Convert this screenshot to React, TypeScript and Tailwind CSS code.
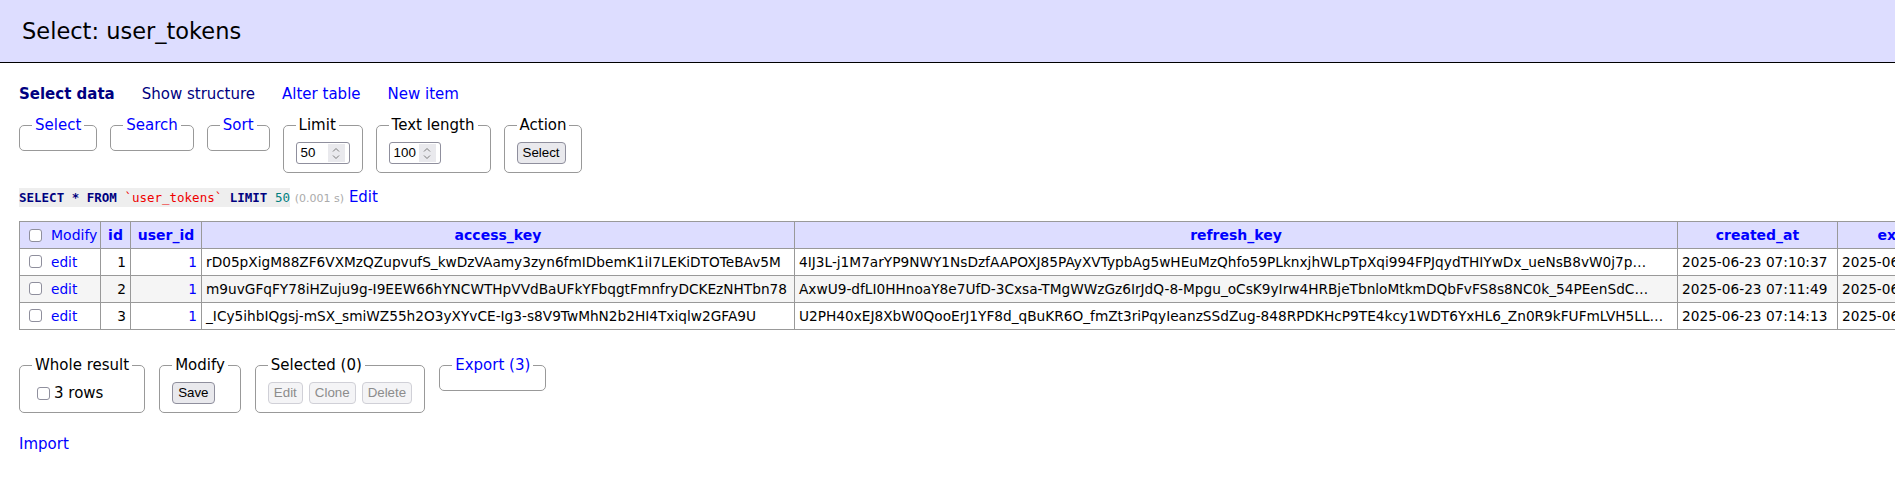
import React from 'react';

type Row = {
  id: number;
  userId: number;
  access: string;
  refresh: string;
  created: string;
  expires: string;
};

const rows: Row[] = [
  {
    id: 1,
    userId: 1,
    access: 'rD05pXigM88ZF6VXMzQZupvufS_kwDzVAamy3zyn6fmIDbemK1iI7LEKiDTOTeBAv5M',
    refresh:
      '4IJ3L-j1M7arYP9NWY1NsDzfAAPOXJ85PAyXVTypbAg5wHEuMzQhfo59PLknxjhWLpTpXqi994FPJqydTHIYwDx_ueNsB8vW0j7p…',
    created: '2025-06-23 07:10:37',
    expires: '2025-06-30 07:10:37',
  },
  {
    id: 2,
    userId: 1,
    access: 'm9uvGFqFY78iHZuju9g-I9EEW66hYNCWTHpVVdBaUFkYFbqgtFmnfryDCKEzNHTbn78',
    refresh:
      'AxwU9-dfLI0HHnoaY8e7UfD-3Cxsa-TMgWWzGz6IrJdQ-8-Mpgu_oCsK9yIrw4HRBjeTbnloMtkmDQbFvFS8s8NC0k_54PEenSdC…',
    created: '2025-06-23 07:11:49',
    expires: '2025-06-30 07:11:49',
  },
  {
    id: 3,
    userId: 1,
    access: '_ICy5ihbIQgsj-mSX_smiWZ55h2O3yXYvCE-Ig3-s8V9TwMhN2b2HI4Txiqlw2GFA9U',
    refresh:
      'U2PH40xEJ8XbW0QooErJ1YF8d_qBuKR6O_fmZt3riPqyIeanzSSdZug-848RPDKHcP9TE4kcy1WDT6YxHL6_Zn0R9kFUFmLVH5LL…',
    created: '2025-06-23 07:14:13',
    expires: '2025-06-30 07:14:13',
  },
];

const Checkbox: React.FC<{ className?: string }> = ({ className = '' }) => (
  <span
    className={`inline-block h-[13px] w-[13px] shrink-0 rounded-[3px] border border-[#8f8f9d] bg-white ${className}`}
  />
);

const Group: React.FC<{ title: string; link?: boolean; children?: React.ReactNode }> = ({
  title,
  link,
  children,
}) => (
  <fieldset className="min-w-0 rounded-[5px] border border-[#999] px-[12px] pt-[7px] pb-[8px]">
    <legend className={`px-[3px] leading-[19px] ${link ? 'text-[#00f]' : 'text-black'}`}>{title}</legend>
    {children}
  </fieldset>
);

const Btn: React.FC<{ children: React.ReactNode; disabled?: boolean }> = ({ children, disabled }) => (
  <button
    type="button"
    className={
      disabled
        ? "flex h-[22px] items-center rounded-[4px] border border-[#d0d0d7] bg-[#f4f4f6] px-[5px] font-['Liberation_Sans',Arial,sans-serif] text-[13.33px] text-[#8c8c8c]"
        : "flex h-[22px] items-center rounded-[4px] border border-[#8f8f9d] bg-[#e9e9ed] px-[5px] font-['Liberation_Sans',Arial,sans-serif] text-[13.33px] text-black"
    }
  >
    {children}
  </button>
);

// number input with the little up/down spinner box
const NumberBox: React.FC<{ value: string; className: string }> = ({ value, className }) => (
  <div
    className={`flex h-[22px] items-center rounded-[3px] border border-[#8f8f9d] bg-white pl-[4px] pr-[4px] font-['Liberation_Sans',Arial,sans-serif] text-[13.33px] ${className}`}
  >
    <span className="flex-1">{value}</span>
    <span className="flex h-[18px] w-[17px] flex-col items-center justify-center gap-[3px] bg-[#e9e9ed]">
      <svg width="8" height="5" viewBox="0 0 8 5">
        <path d="M1 4.5 L4 1.5 L7 4.5" fill="none" stroke="#7a7a7a" strokeWidth="1" />
      </svg>
      <svg width="8" height="5" viewBox="0 0 8 5">
        <path d="M1 0.5 L4 3.5 L7 0.5" fill="none" stroke="#7a7a7a" strokeWidth="1" />
      </svg>
    </span>
  </div>
);

const cell = 'h-[27px] overflow-hidden whitespace-nowrap border border-[#999] px-[4px] align-middle text-[13.7px]';
const head = 'h-[27px] overflow-hidden whitespace-nowrap border border-[#999] bg-[#ddf] px-[4px] text-center font-bold text-[#00f]';

export default function App() {
  return (
    <div className="min-h-screen w-full overflow-hidden bg-white font-['DejaVu_Sans',sans-serif] text-[15px] text-black">
      {/* Title bar */}
      <h2 className="border-b border-black bg-[#ddf] px-[22px] py-[17px] text-[22.5px] leading-[28px] font-normal">
        Select: user_tokens
      </h2>

      <div className="pl-[19px]">
        {/* Links */}
        <p className="mt-[22px] flex gap-[27px] leading-[19px]">
          <span className="font-bold text-[#000080]">Select data</span>
          <a className="text-[#000080]">Show structure</a>
          <a className="text-[#00f]">Alter table</a>
          <a className="text-[#00f]">New item</a>
        </p>

        {/* Select form */}
        <div className="mt-[12px] flex items-start gap-[13px]">
          <Group title="Select" link />
          <Group title="Search" link />
          <Group title="Sort" link />
          <Group title="Limit">
            <NumberBox value="50" className="w-[54px]" />
          </Group>
          <Group title="Text length">
            <NumberBox value="100" className="w-[52px]" />
          </Group>
          <Group title="Action">
            <Btn>Select</Btn>
          </Group>
        </div>

        {/* Query */}
        <p className="mt-[15px] leading-[19px]">
          <code className="bg-[#eee] py-[2px] font-['DejaVu_Sans_Mono',monospace] text-[12.5px]">
            <b className="text-[#000080]">SELECT</b> <b className="text-[#000080]">*</b>{' '}
            <b className="text-[#000080]">FROM</b> <span className="text-[#e00]">`user_tokens`</span>{' '}
            <b className="text-[#000080]">LIMIT</b> <span className="text-[#008080]">50</span>
          </code>{' '}
          <span className="text-[11px] text-[#aaa]">(0.001 s)</span> <a className="text-[#00f]">Edit</a>
        </p>

        {/* Data grid */}
        <table className="mt-[13px] w-[1979px] table-fixed border-collapse text-[14px]">
          <colgroup>
            <col className="w-[81px]" />
            <col className="w-[30px]" />
            <col className="w-[71px]" />
            <col className="w-[593px]" />
            <col className="w-[883px]" />
            <col className="w-[160px]" />
            <col className="w-[161px]" />
          </colgroup>
          <thead>
            <tr>
              <th className="h-[27px] whitespace-nowrap border border-[#999] bg-[#ddf] px-[4px] text-left font-normal">
                <span className="flex items-center">
                  <Checkbox className="ml-[5px] mr-[9px]" />
                  <a className="text-[#00f]">Modify</a>
                </span>
              </th>
              <th className={head}>id</th>
              <th className={head}>user_id</th>
              <th className={head}>access_key</th>
              <th className={head}>refresh_key</th>
              <th className={head}>created_at</th>
              <th className={head}>expires_at</th>
            </tr>
          </thead>
          <tbody>
            {rows.map((r, i) => (
              <tr key={r.id} className={i % 2 === 1 ? 'bg-[#f5f5f5]' : 'bg-white'}>
                <td className={cell}>
                  <span className="flex items-center">
                    <Checkbox className="ml-[5px] mr-[9px]" />
                    <a className="text-[#00f]">edit</a>
                  </span>
                </td>
                <td className={`${cell} text-right`}>{r.id}</td>
                <td className={`${cell} text-right text-[#00f]`}>{r.userId}</td>
                <td className={cell}>{r.access}</td>
                <td className={cell}>{r.refresh}</td>
                <td className={cell}>{r.created}</td>
                <td className={cell}>{r.expires}</td>
              </tr>
            ))}
          </tbody>
        </table>

        {/* Result actions */}
        <div className="mt-[26px] flex items-start gap-[14px]">
          <Group title="Whole result">
            <label className="flex h-[22px] items-center">
              <Checkbox className="ml-[5px] mr-[4px]" />
              3 rows
            </label>
          </Group>
          <Group title="Modify">
            <Btn>Save</Btn>
          </Group>
          <Group title="Selected (0)">
            <div className="flex gap-[6px]">
              <Btn disabled>Edit</Btn>
              <Btn disabled>Clone</Btn>
              <Btn disabled>Delete</Btn>
            </div>
          </Group>
          <Group title="Export (3)" link />
        </div>

        <p className="mt-[22px] leading-[19px]">
          <a className="text-[#00f]">Import</a>
        </p>
      </div>
    </div>
  );
}
